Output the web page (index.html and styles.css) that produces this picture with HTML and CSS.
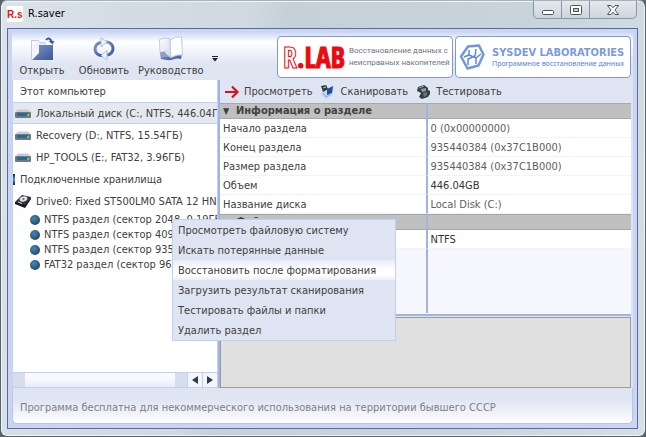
FILE: index.html
```html
<!DOCTYPE html>
<html lang="ru">
<head>
    <meta charset="UTF-8">
    <meta name="viewport" content="width=device-width, initial-scale=1.0">
    <title>R.saver</title>
    <link rel="stylesheet" href="styles.css">
</head>
<body>
    <div class="window">
        <!-- Title bar -->
        <header class="titlebar">
            <span class="app-icon">R.s</span>
            <h1>R.saver</h1>
            <div class="window-buttons">
                <button class="win-btn" aria-label="Свернуть">
                    <svg width="14" height="12" viewBox="0 0 14 12"><rect x="1.5" y="6.5" width="11" height="4" rx="1" fill="#fff" stroke="#4c5560"/></svg>
                </button>
                <button class="win-btn" aria-label="Развернуть">
                    <svg width="14" height="12" viewBox="0 0 14 12"><rect x="1.5" y="1.5" width="11" height="9" rx="1" fill="#fff" stroke="#4c5560"/><rect x="4.5" y="4.5" width="5" height="3" fill="#c6ced8" stroke="#4c5560"/></svg>
                </button>
                <button class="win-btn win-close" aria-label="Закрыть">
                    <svg width="14" height="12" viewBox="0 0 14 12"><path d="M1.500 1.500h3.500l2 2.300 2-2.300h3.500l-3.500 4.500 3.500 4.500h-3.500l-2-2.300-2 2.300h-3.500l3.500-4.500z" fill="#fff" stroke="#4c5560"/></svg>
                </button>
            </div>
        </header>

        <div class="client">
            <!-- Main toolbar -->
            <div class="toolbar">
                <button class="tool-btn">
                    <svg width="26" height="26" viewBox="0 0 26 26">
                        <defs>
                            <linearGradient id="blue" x1="0" y1="0" x2="1" y2="1"><stop offset="0" stop-color="#7f97c9"/><stop offset="1" stop-color="#3b5797"/></linearGradient>
                            <linearGradient id="paper" x1="0" y1="0" x2="1" y2="1"><stop offset="0" stop-color="#fff"/><stop offset="1" stop-color="#cdd6e8"/></linearGradient>
                        </defs>
                        <path d="M2.500 4.500h7l1.500 2h5v17h-13.500z" fill="url(#paper)" stroke="#c3cbdb"/>
                        <path d="M10 9h14v15h-21z" fill="url(#blue)"/>
                        <path d="M3 24v-7l7-8v8z" fill="#f4f7fc"/>
                        <path d="M17 4q3-4 6 2" fill="none" stroke="#3f5d9e" stroke-width="2"/>
                        <path d="M19.500 5h6l-2 3.500z" fill="#3f5d9e"/>
                    </svg>
                    <span>Открыть</span>
                </button>
                <button class="tool-btn">
                    <svg width="26" height="26" viewBox="0 0 26 26">
                        <path d="M11 19.500a6.500 6.500 0 0 1-1-13" fill="none" stroke="url(#blue)" stroke-width="3"/>
                        <path d="M15 6a6.500 6.500 0 0 1 1 13" fill="none" stroke="url(#blue)" stroke-width="3"/>
                        <path d="M10 1.500l6 4.500-6 5z" fill="#eef1f8" stroke="#b4bfd5"/>
                        <path d="M16 14.500l-6 5 6 4.500z" fill="#eef1f8" stroke="#b4bfd5"/>
                    </svg>
                    <span>Обновить</span>
                </button>
                <button class="tool-btn">
                    <svg width="26" height="26" viewBox="0 0 26 26">
                        <path d="M2 17l1 6q8 2 12 .5 5-1.500 8-.5l1-5z" fill="url(#blue)"/>
                        <path d="M1.500 3.500q5-2 10.500-1l1 19q-3-3-8-2l-3-3z" fill="url(#paper)" stroke="#c3cbdb"/>
                        <path d="M12 4q5-4 11.500-3l1 18q-5-1-11.500 2.500z" fill="#fcfdff" stroke="#c3cbdb"/>
                        <path d="M2 16q4 0 4-1l5 6q-4-1-7 1z" fill="#8fa1c5"/>
                    </svg>
                    <span>Руководство</span>
                </button>
                <button class="overflow-btn" aria-label="Ещё">
                    <svg width="6" height="6" viewBox="0 0 6 6"><path d="M0 0h6v1H0zM0 2h6L3 5.500z" fill="#222"/></svg>
                </button>

                <div class="banners">
                    <a class="banner" href="#rlab">
                        <span class="rlab"><span class="rlab-r">R</span>.LAB</span>
                        <span class="rlab-text">Восстановление данных с<br>неисправных накопителей</span>
                    </a>
                    <a class="banner sysdev" href="#sysdev">
                        <svg width="26" height="26" viewBox="0 0 26 26" fill="none" stroke="#5b88dd" stroke-linejoin="round">
                            <path d="M9 2.500l11-1 4.500 9-5 11-11 3-6.500-12z" stroke-width="2.500" stroke="#6f97e3"/>
                            <path d="M10 6v5l-5 2m5-2l7 3v6m0-6l5-4m-5-5l-1 7-7 3v6" stroke-width="1.500"/>
                        </svg>
                        <span class="sysdev-text">
                            <strong>SYSDEV LABORATORIES</strong>
                            <span>Программное восстановление данных</span>
                        </span>
                    </a>
                </div>
            </div>

            <div class="main">
                <!-- Device tree -->
                <nav class="tree">
                    <ul class="tree-list">
                        <li class="tree-row tree-head">Этот компьютер</li>
                        <li class="tree-row selected">
                            <svg class="disk" viewBox="0 0 16 9"><path d="M3 .5h10l3 3H0z" fill="#c9ccd0"/><rect y="3" width="16" height="6" rx="1" fill="#73787f"/><rect x="2" y="4" width="11" height="3" fill="#236b95"/><rect x="12" y="5" width="2" height="2" fill="#4fd36a"/></svg>
                            Локальный диск (C:, NTFS, 446.04ГБ)
                        </li>
                        <li class="tree-row">
                            <svg class="disk" viewBox="0 0 16 9"><path d="M3 .5h10l3 3H0z" fill="#c9ccd0"/><rect y="3" width="16" height="6" rx="1" fill="#73787f"/><rect x="2" y="4" width="11" height="3" fill="#236b95"/><rect x="12" y="5" width="2" height="2" fill="#4fd36a"/></svg>
                            Recovery (D:, NTFS, 15.54ГБ)
                        </li>
                        <li class="tree-row">
                            <svg class="disk" viewBox="0 0 16 9"><path d="M3 .5h10l3 3H0z" fill="#c9ccd0"/><rect y="3" width="16" height="6" rx="1" fill="#73787f"/><rect x="2" y="4" width="11" height="3" fill="#236b95"/><rect x="12" y="5" width="2" height="2" fill="#4fd36a"/></svg>
                            HP_TOOLS (E:, FAT32, 3.96ГБ)
                        </li>
                        <li class="tree-row tree-head drives">Подключенные хранилища</li>
                        <li class="tree-row">
                            <svg class="drive" viewBox="0 0 16 13"><path d="M0 7l7-7 9 2-6 9-9-2z" fill="#33363a"/><path d="M0 7l10 3 6-8v2l-6 9-10-4z" fill="#15171a"/><ellipse cx="8.500" cy="4" rx="4" ry="2.500" fill="#dfe2e6" transform="rotate(-15 8.500 4)"/><circle cx="8.500" cy="4" r="1" fill="#666"/><path d="M3 7l4 1.500" stroke="#dadada"/></svg>
                            Drive0: Fixed ST500LM0 SATA 12 HN-M
                        </li>
                        <li>
                            <ul class="tree-list partitions">
                                <li>NTFS раздел (сектор 2048, 0.19ГБ)</li>
                                <li>NTFS раздел (сектор 409</li>
                                <li>NTFS раздел (сектор 935</li>
                                <li>FAT32 раздел (сектор 96</li>
                            </ul>
                        </li>
                    </ul>
                    <div class="scrollbar">
                        <div class="track"><div class="thumb"></div></div>
                        <button class="scroll-btn" aria-label="Влево"><svg width="6" height="8" viewBox="0 0 6 8"><path d="M6 0v8L0 4z" fill="#333a46"/></svg></button>
                        <button class="scroll-btn" aria-label="Вправо"><svg width="6" height="8" viewBox="0 0 6 8"><path d="M0 0v8l6-4z" fill="#333a46"/></svg></button>
                    </div>
                </nav>

                <!-- Partition details -->
                <section class="details">
                    <div class="actions">
                        <button class="action-btn">
                            <svg width="16" height="14" viewBox="0 0 16 14"><path d="M1 7h12M8 1.500l5.500 5.500-5.500 5.500" fill="none" stroke="#d8101c" stroke-width="2.200"/></svg>
                            Просмотреть
                        </button>
                        <button class="action-btn">
                            <svg width="16" height="14" viewBox="0 0 16 14"><path d="M3 5l6-1 5-3-1 9-7 4-5-4z" fill="#c5daf0"/><path d="M1 1l5-1 2 4-5 3z" fill="#2d3a3c"/><path d="M7 4l6-3-1 7-5 2z" fill="#1c4ca8"/><path d="M3 8l3 4 5-3" stroke="#7ca6d8" fill="none"/><path d="M3 3l3-1" stroke="#b9c4bd"/></svg>
                            Сканировать
                        </button>
                        <button class="action-btn">
                            <svg width="16" height="14" viewBox="0 0 16 14"><path d="M2 2l6-2 4 3v2l2 1v3l-2 3-6 2-3-2 2-4-4-2z" fill="#344046"/><path d="M5 4l5-1v3l-4 1z" fill="#8ca0a4"/><path d="M7 8l4-1v3l-3 2z" fill="#64777a"/><path d="M3 3l5-2" stroke="#9aa"/></svg>
                            Тестировать
                        </button>
                    </div>

                    <div class="props-area">
                        <table class="props">
                            <tbody>
                                <tr class="group"><th scope="rowgroup"><span class="arrow">▼</span>Информация о разделе</th><td></td></tr>
                                <tr><th scope="row">Начало раздела</th><td>0 (0x00000000)</td></tr>
                                <tr><th scope="row">Конец раздела</th><td>935440384 (0x37C1B000)</td></tr>
                                <tr><th scope="row">Размер раздела</th><td>935440384 (0x37C1B000)</td></tr>
                                <tr><th scope="row">Объем</th><td class="dark">446.04GB</td></tr>
                                <tr><th scope="row">Название диска</th><td>Local Disk (C:)</td></tr>
                            </tbody>
                            <tbody>
                                <tr class="group"><th scope="rowgroup"><span class="arrow">▼</span>Файловая система</th><td></td></tr>
                                <tr><th scope="row"></th><td class="dark">NTFS</td></tr>
                                <tr class="filler"><td></td><td></td></tr>
                            </tbody>
                        </table>
                    </div>

                    <div class="preview"></div>
                </section>
            </div>

            <footer class="status">Программа бесплатна для некоммерческого использования на территории бывшего СССР</footer>
        </div>

        <!-- Context menu -->
        <menu class="context-menu">
            <li><button>Просмотреть файловую систему</button></li>
            <li><button>Искать потерянные данные</button></li>
            <li><button class="active">Восстановить после форматирования</button></li>
            <li><button>Загрузить результат сканирования</button></li>
            <li><button>Тестировать файлы и папки</button></li>
            <li><button>Удалить раздел</button></li>
        </menu>
    </div>
</body>
</html>
```

FILE: styles.css
```css
* {
    box-sizing: border-box;
}
body {
    margin: 0;
    background-color: #59636e;
    font-family: Tahoma, "DejaVu Sans Condensed", sans-serif;
    font-size: 11px;
    line-height: 15px;
    color: #404040;
}
button {
    font: inherit;
    color: inherit;
    border: none;
    padding: 0;
    background: none;
    cursor: pointer;
}
ul, menu {
    list-style: none;
    margin: 0;
    padding: 0;
}
svg {
    flex: none;
    display: block;
}

/* Window frame */
.window {
    position: relative;
    display: flex;
    flex-direction: column;
    min-height: 100vh;
    padding: 0 7px 7px 6px;
    border: 1px solid #59636e;
    border-top-color: #a9b2ba;
    border-radius: 7px;
    background: linear-gradient(100deg, #dce3ea 0, #d3dce4 18%, #d0d9e1 35%, #c6d0d9 40%, #c9d3db 75%, #d6dfe6 100%);
    box-shadow: inset 0 0 0 1px #eef3f6;
}
.titlebar {
    display: flex;
    align-items: flex-start;
    height: 27px;
}
.app-icon {
    width: 16px;
    height: 16px;
    margin: 5px 5px 0 0;
    overflow: hidden;
    background-color: #fff;
    color: #f01010;
    font: bold 10px/17px "Liberation Sans", sans-serif;
}
h1 {
    flex: 1;
    margin: 5px 0 0;
    font-size: 11px;
    line-height: 16px;
    font-weight: normal;
    color: #000;
}
.window-buttons {
    display: flex;
    margin-right: 1px;
    border: 1px solid #8b959f;
    border-top: none;
    border-radius: 0 0 5px 5px;
    background: linear-gradient(#e4e9ee, #ccd5dc);
}
.win-btn {
    display: flex;
    align-items: center;
    justify-content: center;
    width: 28px;
    height: 17px;
    border-right: 1px solid #8b959f;
}
.win-close {
    width: 46px;
    border-right: none;
}
.client {
    flex: 1;
    display: flex;
    flex-direction: column;
    padding: 3px 4px 4px;
    border: 1px solid #5d6b9c;
    background-color: #c9d5f1;
}

/* Main toolbar */
.toolbar {
    display: flex;
    align-items: flex-start;
    gap: 2px;
    height: 48px;
    background: linear-gradient(#cbd7f4 0, #fff 10px, #e0e5f2 32px, #dfe4f2);
}
.tool-btn {
    display: flex;
    flex-direction: column;
    align-items: center;
    min-width: 60px;
    padding: 4px 2px 0;
    line-height: 18px;
}
.overflow-btn {
    margin: 24px 0 0 4px;
}
.banners {
    flex: 1;
    display: flex;
    justify-content: flex-end;
    gap: 2px;
    padding: 4px 2px 0 0;
}
.banner {
    display: flex;
    align-items: center;
    gap: 4px;
    width: 176px;
    height: 42px;
    padding-left: 5px;
    border: 1px solid #8497cc;
    border-radius: 4px;
    background-color: #fff;
    text-decoration: none;
    white-space: nowrap;
}
.rlab {
    color: #ea0a0f;
    font: bold 28px/30px "Open Sans Condensed", "Roboto Condensed", "DejaVu Sans Condensed", sans-serif;
    -webkit-text-stroke: 1px #ea0a0f;
}
.rlab-r {
    color: #fff;
}
.rlab-text {
    color: #6d7480;
    font: 8px/12px Roboto, sans-serif;
}
.sysdev {
    gap: 7px;
    padding-left: 3px;
}
.sysdev-text {
    display: flex;
    flex-direction: column;
    color: #4e80ec;
    font: 7px/10px "Noto Sans", sans-serif;
}
.sysdev-text strong {
    color: #7b9bdb;
    font: bold 11px/13px "DejaVu Sans Condensed", sans-serif;
}

/* Two main columns */
.main {
    flex: 1;
    display: flex;
    background-color: #dfe4f2;
}
.tree {
    display: flex;
    flex-direction: column;
    width: 206px;
    flex: none;
    border: 1px solid #c1d1f3;
    border-top: none;
    background-color: #fff;
}
.tree-list {
    overflow: hidden;
    white-space: nowrap;
}
.tree > .tree-list {
    flex: 1;
}
.tree-row {
    display: flex;
    align-items: center;
    gap: 5px;
    height: 22px;
    padding-left: 2px;
}
.tree-head {
    padding-left: 7px;
}
.selected {
    border: 1px solid #c1d1f3;
    border-width: 1px 0;
    background-color: #e5e9ef;
}
.drives {
    position: relative;
}
.drives::before {
    content: "";
    position: absolute;
    left: 0;
    width: 2px;
    height: 11px;
    background: linear-gradient(#222, #3d9dde, #222);
}
.disk {
    width: 16px;
    height: 9px;
}
.drive {
    width: 16px;
    height: 13px;
}
.partitions li {
    display: flex;
    align-items: center;
    gap: 4px;
    height: 15px;
    padding-left: 17px;
}
.partitions li::before {
    content: "";
    flex: none;
    width: 10px;
    height: 10px;
    border-radius: 50%;
    background: radial-gradient(circle at 40% 35%, #4b87ad, #1d4a6d 75%);
}
.scrollbar {
    display: flex;
    height: 15px;
    border-top: 1px solid #c1d1f3;
    background-color: #f3f5fb;
}
.track {
    flex: 1;
    padding: 0 12px;
    background-color: #d6ddec;
}
.thumb {
    height: 100%;
    background: linear-gradient(#f8f9fd 40%, #e8ecf6);
}
.scroll-btn {
    display: flex;
    align-items: center;
    justify-content: center;
    width: 15px;
    border-left: 1px solid #c1d1f3;
}

/* Details */
.details {
    flex: 1;
    display: flex;
    flex-direction: column;
    min-width: 0;
    padding-right: 2px;
    border-left: 2px solid #a3b3df;
}
.actions {
    display: flex;
    gap: 8px;
    height: 23px;
    padding-left: 4px;
}
.action-btn {
    display: flex;
    align-items: center;
    gap: 4px;
}
.props-area {
    flex: 1;
    border-bottom: 2px solid #a3b3df;
    background-color: #f5f7fc;
}
.props {
    width: 100%;
    border-collapse: separate;
    border-spacing: 0;
    table-layout: fixed;
}
.props th, .props td {
    height: 19px;
    padding: 0 3px;
    border-bottom: 1px solid #f0f3fa;
    background-color: #fff;
    font-weight: normal;
    text-align: left;
}
.props td {
    color: #606060;
}
.props td + td, .props th + td {
    border-left: 2px solid #a3b3df;
}
.props .dark {
    color: #333;
}
.props .group th, .props .group td {
    height: 16px;
    line-height: 14px;
    border-top: 1px solid #a8a8a8;
    border-bottom: 1px solid #a8a8a8;
    background-color: #c0c0c0;
    font-weight: bold;
}
.props .group .arrow {
    display: inline-block;
    width: 13px;
    font-size: 9px;
    vertical-align: top;
}
.props .filler td {
    height: 64px;
    border-bottom: none;
    background-color: #f5f7fc;
}
.preview {
    height: 71px;
    margin-top: 1px;
    border: 1px solid #9b9b9b;
    background-color: #e0e0e0;
}
.status {
    height: 36px;
    padding: 12px 7px 0;
    border: 1px solid #b5c5ec;
    border-top: none;
    border-radius: 0 0 5px 5px;
    background: linear-gradient(#dfe4f2 30%, #fdfdff);
    color: #808080;
}

/* Context menu */
.context-menu {
    position: absolute;
    left: 171px;
    top: 218px;
    width: 224px;
    border: 1px solid #bfd0f2;
    background-color: #dfe4f2;
}
.context-menu button {
    display: block;
    width: 100%;
    height: 20px;
    padding-left: 5px;
    text-align: left;
}
.context-menu .active {
    background: linear-gradient(#e6eaf5, #fff 45%, #fff 75%, #ebeef7);
}
```
